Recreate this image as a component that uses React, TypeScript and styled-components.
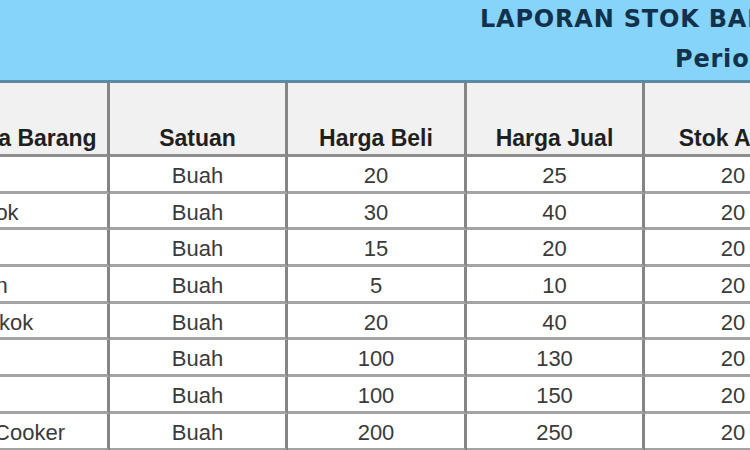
import styled, { createGlobalStyle } from "styled-components";

const GlobalStyle = createGlobalStyle`
    html, body {
        margin: 0;
        padding: 0;
        background: #fff;
        overflow: hidden;
    }
`;

const columnTemplate = "172px 178px 179px 178px 179px 179px 179px";

const headers = ["Nama Barang", "Satuan", "Harga Beli", "Harga Jual", "Stok Awal", "Masuk", "Keluar"];

const items = [
    { name: "Teko", unit: "Buah", buy: 20, sell: 25, stock: 20, inQty: 5, outQty: 3 },
    { name: "Sendok", unit: "Buah", buy: 30, sell: 40, stock: 20, inQty: 10, outQty: 8 },
    { name: "Pisau", unit: "Buah", buy: 15, sell: 20, stock: 20, inQty: 4, outQty: 2 },
    { name: "Sabun", unit: "Buah", buy: 5, sell: 10, stock: 20, inQty: 12, outQty: 9 },
    { name: "Mangkok", unit: "Buah", buy: 20, sell: 40, stock: 20, inQty: 6, outQty: 4 },
    { name: "Oven", unit: "Buah", buy: 100, sell: 130, stock: 20, inQty: 2, outQty: 1 },
    { name: "Kipas", unit: "Buah", buy: 100, sell: 150, stock: 20, inQty: 3, outQty: 2 },
    { name: "Rice Cooker", unit: "Buah", buy: 200, sell: 250, stock: 20, inQty: 1, outQty: 1 },
];

const App = () => {
    return (
        <>
            <GlobalStyle />
            <Sheet>
                <Band>
                    <Title>LAPORAN STOK BARANG</Title>
                    <Period>Periode : Januari 2021</Period>
                </Band>
                <HeadRow>
                    {headers.map((label) => (
                        <HeadCell key={label}>{label}</HeadCell>
                    ))}
                </HeadRow>
                {items.map((item) => (
                    <Row key={item.name}>
                        <Cell align="left">{item.name}</Cell>
                        <Cell>{item.unit}</Cell>
                        <Cell>{item.buy}</Cell>
                        <Cell>{item.sell}</Cell>
                        <Cell>{item.stock}</Cell>
                        <Cell>{item.inQty}</Cell>
                        <Cell>{item.outQty}</Cell>
                    </Row>
                ))}
            </Sheet>
        </>
    );
};

const Sheet = styled.div`
    display: flex;
    flex-flow: column;
    width: 1244px;
    margin-left: -62px;
`;

const Band = styled.div`
    display: flex;
    flex-flow: column;
    height: 83px;
    box-sizing: border-box;
    padding-top: 5px;
    background-color: #87d4fa;
    border-bottom: 3px solid #5a8ba3;
    font-family: "DejaVu Sans", sans-serif;
    font-weight: bold;
    font-size: 24px;
    line-height: 28px;
    letter-spacing: 0.8px;
    color: #12324c;
    white-space: nowrap;
`;

const Title = styled.div`
    padding-left: 542px;
`;

const Period = styled.div`
    margin-top: 12px;
    padding-left: 737px;
`;

const HeadRow = styled.div`
    display: grid;
    grid-template-columns: ${columnTemplate};
    height: 74px;
    background-color: #f1f1f1;
`;

const HeadCell = styled.div`
    display: flex;
    align-items: flex-end;
    justify-content: center;
    box-sizing: border-box;
    padding-bottom: 2px;
    border-right: 3px solid #858585;
    border-bottom: 3px solid #8e8e8e;
    font-family: "Liberation Sans", Arial, sans-serif;
    font-weight: bold;
    font-size: 23px;
    color: #1f1f1f;
    white-space: nowrap;
`;

const Row = styled.div`
    display: grid;
    grid-template-columns: ${columnTemplate};
    height: 36.7px;
    background-color: #fff;
`;

const Cell = styled.div<{ align?: "left" | "center" }>`
    display: flex;
    align-items: center;
    justify-content: ${(props) => (props.align === "left" ? "flex-start" : "center")};
    box-sizing: border-box;
    padding: 3px 0 0 ${(props) => (props.align === "left" ? "6px" : "0")};
    border-right: 3px solid #858585;
    border-bottom: 3px solid #a3a3a3;
    font-family: "Liberation Sans", Arial, sans-serif;
    font-size: 22px;
    line-height: 25px;
    color: #3a3a3a;
    white-space: nowrap;
`;

export default App;
